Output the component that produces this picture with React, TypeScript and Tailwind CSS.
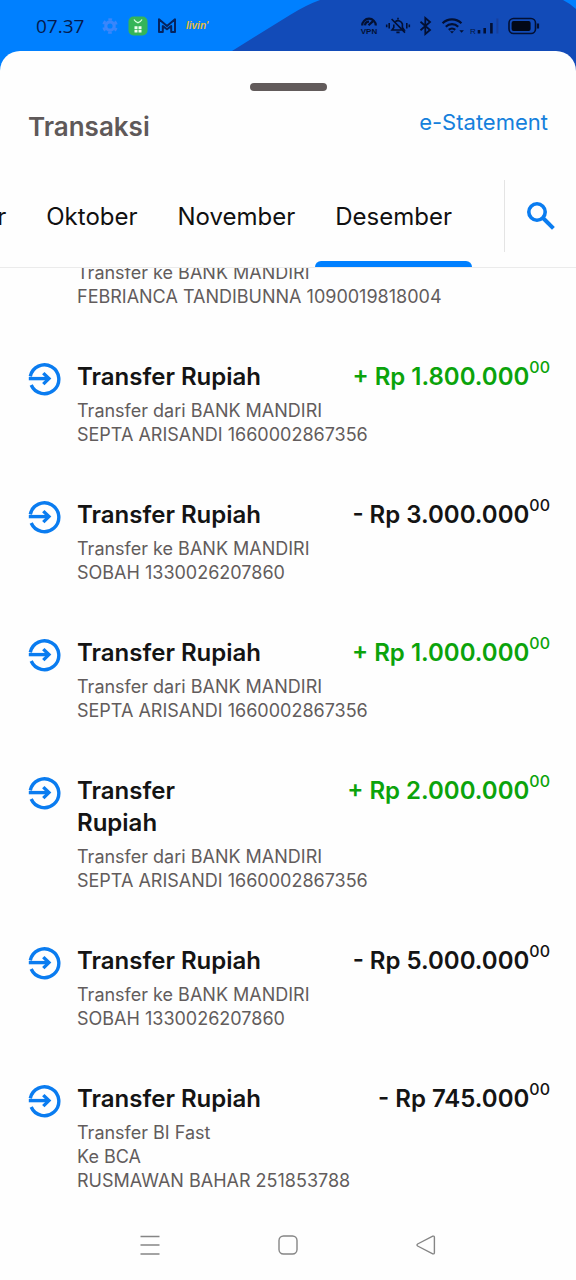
import { useState } from 'react';

const months = ['September', 'Oktober', 'November', 'Desember'];

const transactions = [
  { id: 1, title: '', amount: '', credit: false, lines: ['Transfer ke BANK MANDIRI', 'FEBRIANCA TANDIBUNNA 1090019818004'] },
  { id: 2, title: 'Transfer Rupiah', amount: '+ Rp 1.800.000', credit: true, lines: ['Transfer dari BANK MANDIRI', 'SEPTA ARISANDI 1660002867356'] },
  { id: 3, title: 'Transfer Rupiah', amount: '- Rp 3.000.000', credit: false, lines: ['Transfer ke BANK MANDIRI', 'SOBAH 1330026207860'] },
  { id: 4, title: 'Transfer Rupiah', amount: '+ Rp 1.000.000', credit: true, lines: ['Transfer dari BANK MANDIRI', 'SEPTA ARISANDI 1660002867356'] },
  { id: 5, title: 'Transfer\nRupiah', amount: '+ Rp 2.000.000', credit: true, lines: ['Transfer dari BANK MANDIRI', 'SEPTA ARISANDI 1660002867356'] },
  { id: 6, title: 'Transfer Rupiah', amount: '- Rp 5.000.000', credit: false, lines: ['Transfer ke BANK MANDIRI', 'SOBAH 1330026207860'] },
  { id: 7, title: 'Transfer Rupiah', amount: '- Rp 745.000', credit: false, lines: ['Transfer BI Fast', 'Ke BCA', 'RUSMAWAN BAHAR 251853788'] },
];

function TransferIcon() {
  return (
    <svg className="mt-0.5 h-[33px] w-[33px] shrink-0" viewBox="0 0 33 33" fill="none" stroke="#0a7cf0" strokeWidth="3.4" aria-hidden="true">
      <path d="M2.3 13.4A14.4 14.4 0 1 1 3.2 22" />
      <path d="M0.8 15.6H20.5" />
      <path d="M15.3 10.1L20.9 15.6L15.3 21.1" />
    </svg>
  );
}

function StatusBar() {
  return (
    <div className="relative flex h-[51px] items-center justify-between pl-9 pr-9 text-[#051a4d]">
      <div className="flex items-center">
        <span className="w-[66px] font-['Open_Sans',sans-serif] text-[19px] leading-6">07.37</span>
        <svg className="h-4 w-4" viewBox="0 0 16 16" fill="none" stroke="#3a86fb" aria-hidden="true">
          <circle cx="8" cy="8" r="4.2" strokeWidth="3.2" />
          <circle cx="8" cy="8" r="6.6" strokeWidth="2.4" strokeDasharray="3.6 3.311" strokeDashoffset="1.8" transform="rotate(30 8 8)" />
        </svg>
        <svg className="ml-2.5 h-5 w-5" viewBox="0 0 20 20" fill="none" aria-hidden="true">
          <rect x="0.5" y="0.5" width="19" height="19" rx="5" fill="#35b558" />
          <path d="M6 3.5Q10 10 14 3.5" stroke="#d9ffe0" strokeWidth="1.3" />
          <path d="M6.5 10.3h3v2.6h-3zM10.5 10.3h3v2.6h-3zM6.5 13.8h3v2.6h-3zM10.5 13.8h3v2.6h-3z" fill="#effff1" />
        </svg>
        <svg className="ml-2.5 h-[15px] w-[18px]" viewBox="0 0 18 15" fill="none" aria-hidden="true">
          <path d="M1 14V1.3L9 8L17 1.3V14H13.2V8L9 11.3L4.8 8V14Z" stroke="#05235f" strokeWidth="2" strokeLinejoin="round" />
        </svg>
        <b className="ml-2.5 font-['Liberation_Sans_Narrow','Liberation_Sans',sans-serif] text-[10px] italic leading-4 text-[#e8bc35]">livin'</b>
      </div>

      <svg className="h-5 w-[180px]" viewBox="0 0 180 20" fill="none" stroke="#031033" strokeWidth="1.6" aria-hidden="true">
        {/* vpn */}
        <path d="M2.2 9.5A6.8 6.8 0 0 1 15.8 9.5M5 9.3A4 4 0 0 1 9 5.7M8.5 9.3L12.8 5.4" strokeWidth="2.2" />
        <text x="9" y="18" textAnchor="middle" stroke="none" fill="#031033" fontFamily="Liberation Sans, sans-serif" fontSize="8" fontWeight="700">VPN</text>
        {/* muted bell, vibrating */}
        <path d="M34 14H44.2L42.4 11.4V8A4.4 4.4 0 0 0 35.4 5.6M33.8 8.4V11.4L32 14H34M38 3.6V1.8M36.4 16.4H39.6M31.6 3L45 16.6" strokeWidth="1.6" />
        <path d="M29.2 7V12.5M26.7 8.4V11.2M46.8 7V12.5M49.3 8.4V11.2" />
        {/* bluetooth */}
        <path d="M60.5 5.8L70 14L65.3 18V2L70 6L60.5 14.2" strokeWidth="1.8" />
        {/* wifi */}
        <path d="M82.6 7.2A13.4 13.4 0 0 1 101.4 7.2M85.8 10.7A9 9 0 0 1 98.2 10.7M88.8 13.9A4.7 4.7 0 0 1 95.2 13.9" strokeWidth="2.2" />
        <path d="M90 15.3L92 17.6L94 15.3ZM99.3 14.2H103.9L101.6 16.8Z" fill="#031033" stroke="none" />
        {/* roaming signal */}
        <text x="110" y="17.6" stroke="none" fill="#03163f" fontFamily="Liberation Sans, sans-serif" fontSize="8">R</text>
        <path d="M119 17.5V14M124.7 17.5V12M131.4 17.5V7" strokeWidth="2.6" />
        <path d="M137.4 17.5V2.5" stroke="#173f9c" strokeWidth="2" />
        {/* battery */}
        <rect x="149" y="2.5" width="26.5" height="15" rx="4.5" />
        <rect x="151.6" y="5" width="19" height="10" rx="2" fill="#020817" stroke="none" />
        <path d="M178 7.5V12.5" strokeWidth="2.2" />
      </svg>
    </div>
  );
}

function App() {
  const [month, setMonth] = useState('Desember');

  return (
    <div className="relative flex min-h-screen flex-col overflow-hidden bg-[#0080ff] font-['Inter','Liberation_Sans',sans-serif]">
      {/* darker wave behind the status bar */}
      <svg className="absolute left-0 top-0 h-20 w-full" viewBox="0 0 576 80" preserveAspectRatio="none" aria-hidden="true">
        <path d="M185 80L232 51L290 15Q306 5 320 0H563Q571 4 576 9V80Z" fill="#124bb8" />
      </svg>

      <StatusBar />

      <main className="relative flex grow flex-col rounded-t-[20px] bg-[#fefefe]">
        <div className="mx-auto mt-8 h-2 w-[77px] rounded-full bg-[#625b5b]"></div>

        <header className="flex items-start justify-between px-7 pt-3">
          <h1 className="pt-2 text-[26px] font-semibold leading-8 text-[#5f5959]">Transaksi</h1>
          <a href="#statement" className="pt-[3px] text-[22px] leading-8 text-[#1580dc]">e-Statement</a>
        </header>

        <div className="mt-[37px] flex h-[88px] border-b border-[#ebebeb]">
          <nav className="flex min-w-0 flex-1 justify-end overflow-hidden pr-8">
            {months.map(m => (
              <button
                key={m}
                className="flex shrink-0 flex-col justify-between text-2xl leading-8 text-[#101010]"
                onClick={() => setMonth(m)}
              >
                <span className="px-5 pt-[21px]">{m}</span>
                <span className={m === month ? 'h-1.5 w-full rounded-t-md bg-[#0080ff]' : 'h-1.5 w-full'}></span>
              </button>
            ))}
          </nav>
          <button className="flex h-[72px] w-[72px] items-center justify-center border-l border-[#e4e4e4]" aria-label="Cari">
            <svg className="h-7 w-7" viewBox="0 0 28 28" fill="none" stroke="#0a7cf0" strokeWidth="3.6" aria-hidden="true">
              <circle cx="10" cy="10" r="8.2" />
              <path d="M16 16L26.4 26.4" strokeWidth="4" />
            </svg>
          </button>
        </div>

        <div className="grow overflow-hidden">
          <ul className="-mt-[7px] flex flex-col gap-[52px]">
            {transactions.map(t => (
              <li key={t.id} className="flex items-start gap-4 pl-7 pr-[26px]">
                {t.title ? <TransferIcon /> : <span className="w-[33px] shrink-0"></span>}
                <div className="min-w-0 flex-1">
                  {t.title && (
                    <div className="mb-1.5 flex items-start justify-between text-2xl font-semibold leading-8 text-[#141414]">
                      <h2 className="whitespace-pre-line">{t.title}</h2>
                      <p className={t.credit ? 'flex whitespace-nowrap text-[#0ba30b]' : 'flex whitespace-nowrap'}>
                        {t.amount}
                        <span className="text-base font-medium leading-3">00</span>
                      </p>
                    </div>
                  )}
                  {t.lines.map(line => (
                    <p key={line} className="text-lg leading-6 text-[#625c5c]">{line}</p>
                  ))}
                </div>
              </li>
            ))}
          </ul>
        </div>

        <footer className="flex h-[70px] shrink-0 items-center justify-between px-[140px]">
          <button aria-label="Menu">
            <svg className="h-5 w-5" viewBox="0 0 20 20" stroke="#858585" strokeWidth="1.4" aria-hidden="true">
              <path d="M0.5 1.5H19.5M0.5 10H19.5M0.5 19H19.5" />
            </svg>
          </button>
          <button aria-label="Beranda">
            <svg className="h-5 w-5" viewBox="0 0 20 20" fill="none" stroke="#858585" strokeWidth="1.4" aria-hidden="true">
              <rect x="1" y="1" width="18" height="18" rx="4.5" />
            </svg>
          </button>
          <button aria-label="Kembali">
            <svg className="h-5 w-5" viewBox="0 0 20 20" fill="none" stroke="#858585" strokeWidth="1.4" strokeLinejoin="round" aria-hidden="true">
              <path d="M1.6 9Q0.4 10 1.6 11L16.8 18.8Q18.4 19.3 18.4 17.5V2.5Q18.4 0.7 16.8 1.2Z" />
            </svg>
          </button>
        </footer>
      </main>
    </div>
  );
}

export default App;
